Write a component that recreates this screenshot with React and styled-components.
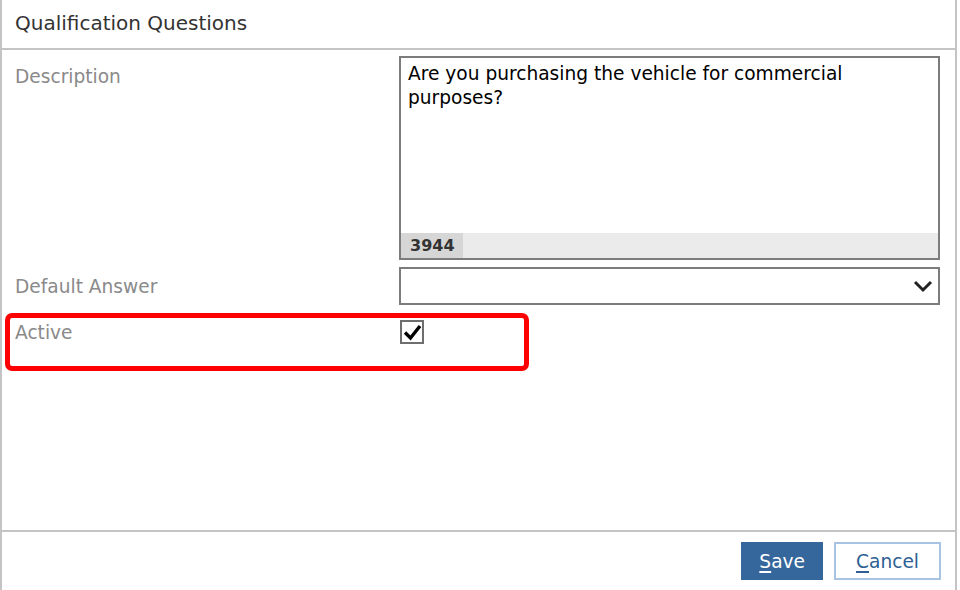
import React from "react"
import styled, { createGlobalStyle } from "styled-components"

const GlobalStyle = createGlobalStyle`
  html, body {
    margin: 0;
    padding: 0;
    background: #ffffff;
  }
  * {
    box-sizing: border-box;
  }
`

const Dialog = styled.div`
  position: relative;
  width: 957px;
  height: 590px;
  display: flex;
  flex-direction: column;
  border-left: 2px solid #c4c4c4;
  border-right: 2px solid #c4c4c4;
  font-family: "DejaVu Sans", Tahoma, sans-serif;
  background: #fff;
`

const Header = styled.div`
  height: 50px;
  display: flex;
  align-items: center;
  padding: 0 0 3px 13px;
  border-bottom: 2px solid #c4c4c4;
`

const Title = styled.h2`
  margin: 0;
  font-size: 20px;
  font-weight: 400;
  color: #333;
`

const Body = styled.div`
  flex: 1;
  display: flex;
  flex-direction: column;
  gap: 7px;
  padding: 6px 15px 0 13px;
`

const Row = styled.div`
  display: grid;
  grid-template-columns: 384px 541px;
  align-items: ${(props) => (props.center ? "center" : "start")};
  margin-top: ${(props) => props.offset || 0}px;
`

const Label = styled.label`
  font-size: 18.6px;
  color: #8a8a8a;
  padding-top: ${(props) => props.pad || 0}px;
`

const TextBox = styled.div`
  height: 204px;
  border: 2px solid #7c7c7c;
  display: flex;
  flex-direction: column;
`

const TextValue = styled.div`
  flex: 1;
  padding: 4px 6px;
  font-size: 18.6px;
  line-height: 24px;
  color: #000;
  white-space: pre-wrap;
  border-left: 1px solid transparent;
`

const Counter = styled.div`
  height: 25px;
  background: #ebebeb;
  display: flex;
`

const CounterCell = styled.span`
  width: 62px;
  background: #d6d6d6;
  font-size: 16px;
  font-weight: 700;
  color: #333;
  display: flex;
  align-items: center;
  padding-left: 9px;
`

const Select = styled.div`
  height: 38px;
  border: 2px solid #7c7c7c;
  display: flex;
  align-items: center;
  justify-content: flex-end;
  padding-right: 5px;
`

const Checkbox = styled.span`
  width: 24px;
  height: 24px;
  border: 2px solid #6e6e6e;
  display: flex;
  align-items: center;
  justify-content: center;
  margin-left: 1px;
`

const Highlight = styled.div`
  position: absolute;
  left: 3px;
  top: 313px;
  width: 524px;
  height: 58px;
  border: 5px solid #ff0000;
  border-radius: 7px;
  pointer-events: none;
`

const Footer = styled.div`
  height: 60px;
  border-top: 2px solid #c4c4c4;
  display: flex;
  justify-content: flex-end;
  align-items: flex-start;
  gap: 11px;
  padding: 10px 14px 0 0;
`

const Button = styled.button`
  height: 38px;
  padding: 0 ${(props) => (props.primary ? 16 : 20)}px;
  font-family: "DejaVu Sans", Tahoma, sans-serif;
  font-size: 18.6px;
  border: 2px solid ${(props) => (props.primary ? "#35669c" : "#a8c4e2")};
  background: ${(props) => (props.primary ? "#35669c" : "#ffffff")};
  color: ${(props) => (props.primary ? "#ffffff" : "#2f5f94")};
  u {
    text-decoration-thickness: 2px;
    text-underline-offset: 3px;
  }
`

const Chevron = () => (
  <svg width="20" height="14" viewBox="0 0 20 14">
    <path d="M2 3 L10 11 L18 3" fill="none" stroke="#222" strokeWidth="3" />
  </svg>
)

const Check = () => (
  <svg width="19" height="17" viewBox="0 0 19 17">
    <path d="M2 8.5 L7.5 14 L17 2" fill="none" stroke="#000" strokeWidth="3.4" />
  </svg>
)

const App = () => {
  return (
    <Dialog>
      <GlobalStyle />
      <Header>
        <Title>Qualification Questions</Title>
      </Header>
      <Body>
        <Row>
          <Label pad={10}>Description</Label>
          <TextBox>
            <TextValue>
              {"Are you purchasing the vehicle for commercial\npurposes?"}
            </TextValue>
            <Counter>
              <CounterCell>3944</CounterCell>
            </Counter>
          </TextBox>
        </Row>
        <Row center>
          <Label>Default Answer</Label>
          <Select>
            <Chevron />
          </Select>
        </Row>
        <Row center offset={8}>
          <Label>Active</Label>
          <Checkbox>
            <Check />
          </Checkbox>
        </Row>
      </Body>
      <Footer>
        <Button primary>
          <u>S</u>ave
        </Button>
        <Button>
          <u>C</u>ancel
        </Button>
      </Footer>
      <Highlight />
    </Dialog>
  )
}

export default App
